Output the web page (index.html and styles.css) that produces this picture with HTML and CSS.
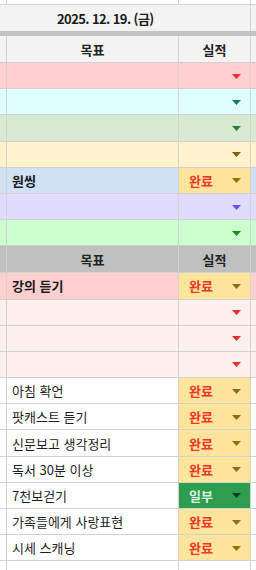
FILE: index.html
```html
<!DOCTYPE html>
<html lang="ko">
<head>
<meta charset="utf-8">
<link rel="stylesheet" href="styles.css">
</head>
<body>
<div class="sheet">
  <div class="row top"><div></div><div></div><div></div><div></div></div>
  <div class="row date"><div class="date-cell">2025. 12. 19. (금)</div><div></div></div>
  <div class="band"></div>
  <div class="row head light-gray"><div></div><div class="hd">목표</div><div class="hd">실적</div><div></div></div>

  <div class="row pink"><div></div><div class="goal"></div><div class="res only"><svg class="arr a-red" viewBox="0 0 9 5"><path d="M0 0h9L4.5 5z"/></svg></div><div></div></div>
  <div class="row cyan"><div></div><div class="goal"></div><div class="res only"><svg class="arr a-teal" viewBox="0 0 9 5"><path d="M0 0h9L4.5 5z"/></svg></div><div></div></div>
  <div class="row sage"><div></div><div class="goal"></div><div class="res only"><svg class="arr a-sage" viewBox="0 0 9 5"><path d="M0 0h9L4.5 5z"/></svg></div><div></div></div>
  <div class="row cream"><div></div><div class="goal"></div><div class="res only"><svg class="arr a-brown" viewBox="0 0 9 5"><path d="M0 0h9L4.5 5z"/></svg></div><div></div></div>
  <div class="row blue"><div></div><div class="goal bold">원씽</div><div class="res done"><span>완료</span><svg class="arr a-olive" viewBox="0 0 9 5"><path d="M0 0h9L4.5 5z"/></svg></div><div></div></div>
  <div class="row lav"><div></div><div class="goal"></div><div class="res only"><svg class="arr a-purple" viewBox="0 0 9 5"><path d="M0 0h9L4.5 5z"/></svg></div><div></div></div>
  <div class="row mint"><div></div><div class="goal"></div><div class="res only"><svg class="arr a-green" viewBox="0 0 9 5"><path d="M0 0h9L4.5 5z"/></svg></div><div></div></div>

  <div class="row head dark-gray"><div></div><div class="hd">목표</div><div class="hd">실적</div><div></div></div>

  <div class="row pink"><div></div><div class="goal bold">강의 듣기</div><div class="res done"><span>완료</span><svg class="arr a-olive" viewBox="0 0 9 5"><path d="M0 0h9L4.5 5z"/></svg></div><div></div></div>
  <div class="row blush"><div></div><div class="goal"></div><div class="res only"><svg class="arr a-red" viewBox="0 0 9 5"><path d="M0 0h9L4.5 5z"/></svg></div><div></div></div>
  <div class="row blush"><div></div><div class="goal"></div><div class="res only"><svg class="arr a-red" viewBox="0 0 9 5"><path d="M0 0h9L4.5 5z"/></svg></div><div></div></div>
  <div class="row blush"><div></div><div class="goal"></div><div class="res only"><svg class="arr a-red" viewBox="0 0 9 5"><path d="M0 0h9L4.5 5z"/></svg></div><div></div></div>

  <div class="row"><div></div><div class="goal">아침 확언</div><div class="res done"><span>완료</span><svg class="arr a-olive" viewBox="0 0 9 5"><path d="M0 0h9L4.5 5z"/></svg></div><div></div></div>
  <div class="row"><div></div><div class="goal">팟캐스트 듣기</div><div class="res done"><span>완료</span><svg class="arr a-olive" viewBox="0 0 9 5"><path d="M0 0h9L4.5 5z"/></svg></div><div></div></div>
  <div class="row"><div></div><div class="goal">신문보고 생각정리</div><div class="res done"><span>완료</span><svg class="arr a-olive" viewBox="0 0 9 5"><path d="M0 0h9L4.5 5z"/></svg></div><div></div></div>
  <div class="row"><div></div><div class="goal">독서 30분 이상</div><div class="res done"><span>완료</span><svg class="arr a-olive" viewBox="0 0 9 5"><path d="M0 0h9L4.5 5z"/></svg></div><div></div></div>
  <div class="row"><div></div><div class="goal">7천보걷기</div><div class="res part"><span>일부</span><svg class="arr a-dark" viewBox="0 0 9 5"><path d="M0 0h9L4.5 5z"/></svg></div><div></div></div>
  <div class="row"><div></div><div class="goal">가족들에게 사랑표현</div><div class="res done"><span>완료</span><svg class="arr a-olive" viewBox="0 0 9 5"><path d="M0 0h9L4.5 5z"/></svg></div><div></div></div>
  <div class="row"><div></div><div class="goal">시세 스캐닝</div><div class="res done"><span>완료</span><svg class="arr a-olive" viewBox="0 0 9 5"><path d="M0 0h9L4.5 5z"/></svg></div><div></div></div>
  <div class="row"><div></div><div class="goal"></div><div class="res"></div><div></div></div>
</div>
</body>
</html>
```

FILE: styles.css
```css
html, body {
  margin: 0;
  padding: 0;
  background: #ffffff;
}
body {
  font-family: "Noto Sans CJK KR", "Noto Sans", sans-serif;
  color: #1a1a1a;
  overflow: hidden;
}
.sheet {
  width: 256px;
  display: flex;
  flex-direction: column;
}
.row {
  display: grid;
  grid-template-columns: 7px 172px 72px 5px;
  height: 26.2px;
  box-sizing: border-box;
  border-bottom: 1px solid #d2d2d2;
  flex: none;
}
.row > div {
  border-right: 1px solid #d2d2d2;
  min-width: 0;
}
.row > div:last-child {
  border-right: none;
}
.row.top {
  height: 5px;
}
.row.date {
  grid-template-columns: 251px 5px;
  height: 26px;
  border-bottom: none;
  background: #f3f3f3;
}
.date-cell {
  display: flex;
  align-items: center;
  padding-left: 57px;
  font-size: 13px;
  font-weight: 700;
  letter-spacing: -0.6px;
  color: #1c1c1c;
}
.band {
  height: 5px;
  background: #c3c3c3;
  flex: none;
}
.row.head {
  height: 27px;
}
.hd {
  display: flex;
  align-items: center;
  justify-content: center;
  font-size: 13px;
  font-weight: 700;
  color: #222;
}
.light-gray { background: #f3f3f3; }
.dark-gray { background: #c0c0c0; }
.pink { background: #ffcfcf; }
.cyan { background: #dffeff; }
.sage { background: #d9ead3; }
.cream { background: #fff2cc; }
.blue { background: #cfe2f3; }
.lav { background: #e1dcfd; }
.mint { background: #cdfecd; }
.blush { background: #fff0f0; }

.goal {
  display: flex;
  align-items: center;
  padding-left: 5px;
  font-size: 13px;
  color: #1e1e1e;
  white-space: nowrap;
}
.goal.bold {
  font-weight: 700;
  color: #1a1a1a;
}
.res {
  display: flex;
  align-items: center;
  justify-content: space-between;
  padding: 0 9px 0 10px;
  font-size: 13px;
  font-weight: 700;
}
.res.only {
  justify-content: flex-end;
}
.res.done {
  background: #ffe49c;
  color: #f8332a;
}
.res.part {
  background: #2e9e4e;
  color: #dcf3e2;
}
.arr {
  width: 9px;
  height: 5px;
  display: block;
  fill: currentColor;
  margin-top: 1px;
}
.a-red { color: #e8302a; }
.a-teal { color: #1d7b62; }
.a-sage { color: #2d7d3c; }
.a-brown { color: #7b5f0c; }
.a-olive { color: #8a6e12; }
.a-purple { color: #6458f0; }
.a-green { color: #14901f; }
.a-dark { color: #0e3b1e; }
```
